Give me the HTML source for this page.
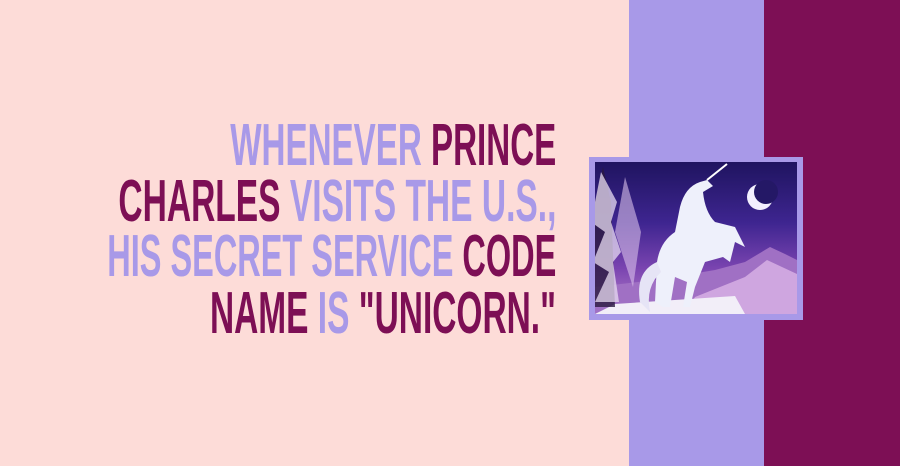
<!DOCTYPE html>
<html><head><meta charset="utf-8"><style>
html,body{margin:0;padding:0}
body{width:900px;height:466px;position:relative;overflow:hidden;background:#FDDCD8;font-family:"Liberation Sans",sans-serif}
.lav{position:absolute;left:629px;top:0;width:135px;height:466px;background:#A899E8}
.mag{position:absolute;left:764px;top:0;width:136px;height:466px;background:#7D0F55}
.frame{position:absolute;left:589px;top:157px;width:214px;height:163px;background:#A899E8}
.pic{position:absolute;left:6px;top:5px;width:202px;height:152px;overflow:hidden;background:linear-gradient(#1f1460 0%,#3e2590 40%,#7a44b0 70%,#b682cc 100%)}
.line{position:absolute;right:344px;font-weight:bold;font-size:59px;line-height:59px;white-space:nowrap;transform-origin:right top;letter-spacing:0}
.l{color:#A899E8}.d{color:#7D0F55}
</style></head><body>
<div class="lav"></div><div class="mag"></div>
<div class="line" id="a" style="top:116px" data-w="326"><span class="l">WHENEVER</span> <span class="d">PRINCE</span></div>
<div class="line" id="b" style="top:172px" data-w="438"><span class="d">CHARLES</span> <span class="l">VISITS THE U.S.,</span></div>
<div class="line" id="c" style="top:227px" data-w="449"><span class="l">HIS SECRET SERVICE</span> <span class="d">CODE</span></div>
<div class="line" id="e" style="top:284px" data-w="346"><span class="d">NAME</span> <span class="l">IS</span> <span class="d">"UNICORN."</span></div>
<div class="frame"><div class="pic">
<svg width="202" height="152" viewBox="0 0 202 152">
<path d="M0 152 L0 125 L60 118 L120 108 L150 100 L175 85 L190 92 L202 98 L202 152Z" fill="#a070c4"/>
<path d="M100 135 L150 115 L172 98 L202 112 L202 152 L90 152Z" fill="#cfa6e0"/>
<path d="M20 142 L140 134 L150 152 L0 152Z" fill="#f2eef8"/>
<path d="M8 5 L0 40 L0 145 L20 145 L16 40Z" fill="#2a1a40" opacity=".8"/>
<path d="M6 10 L-4 60 L10 70 L-2 100 L14 110 L0 140 L24 140 L18 100 L26 90 L16 60 L22 40Z" fill="#e8dcf2" opacity=".75"/>
<path d="M30 15 L20 70 L38 125 L46 70Z" fill="#d8c0ea" opacity=".6"/>
<circle cx="165" cy="35" r="13" fill="#f3f0ff"/><circle cx="171" cy="30" r="12" fill="#241866"/>
<path d="M60 140 L62 100 Q65 80 80 70 L85 45 Q90 25 105 20 L112 18 L118 24 L108 30 Q110 50 120 60 L140 65 L150 85 L140 80 L135 100 L128 95 L110 100 L100 125 L95 145 L88 145 L92 120 L80 115 L75 145 L68 145Z" fill="#eef0fb"/>
<path d="M62 100 Q40 110 45 140 L55 150 Q50 125 66 110Z" fill="#e6e4f6"/>
<path d="M112 18 L132 2" stroke="#fff" stroke-width="2"/>
</svg></div></div>
<script>
document.querySelectorAll('.line').forEach(function(el){var w=el.getBoundingClientRect().width;var s=(+el.dataset.w)/w;el.style.transform='scaleX('+s+')';});
</script>
</body></html>
